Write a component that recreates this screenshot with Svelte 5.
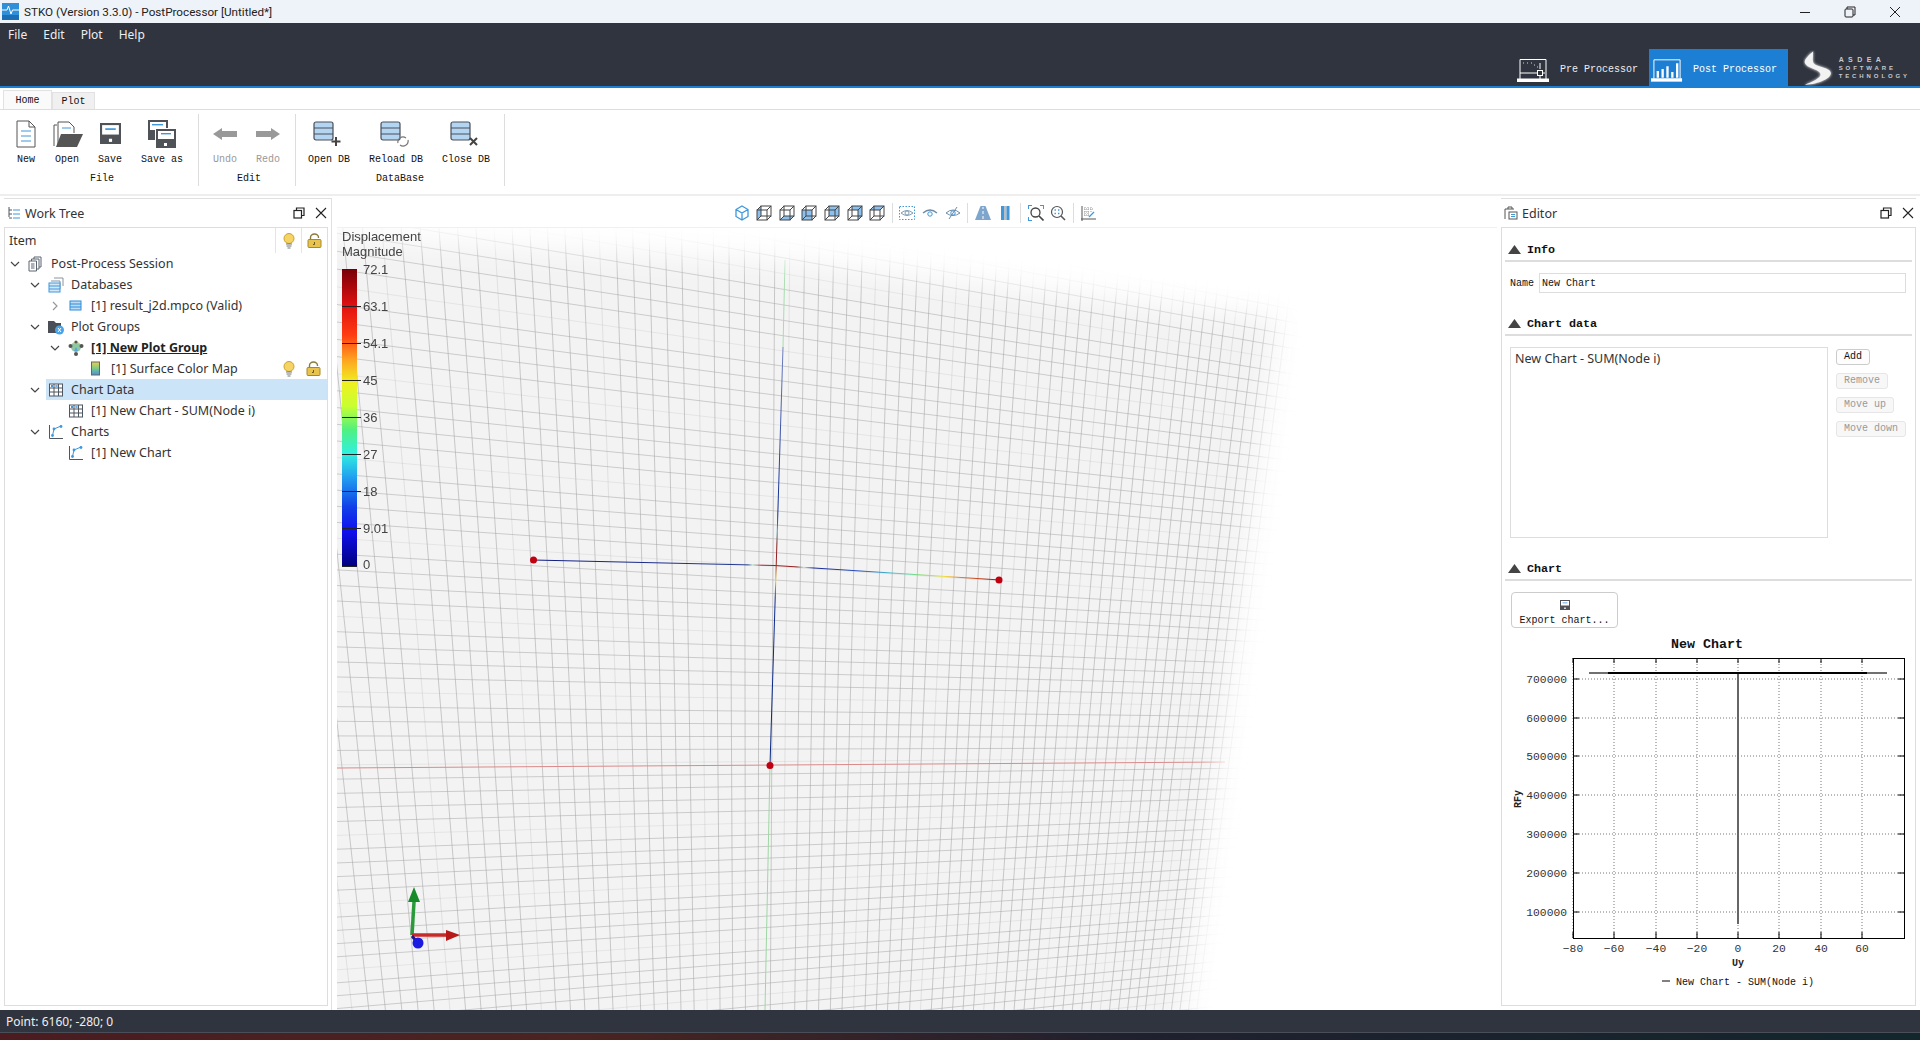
<script>
  const menus = ['File', 'Edit', 'Plot', 'Help'];

  const tree = [
    { d: 0, label: 'Post-Process Session', icon: 'session', arrow: 'open' },
    { d: 1, label: 'Databases', icon: 'dbs', arrow: 'open' },
    { d: 2, label: '[1] result_j2d.mpco (Valid)', icon: 'db', arrow: 'closed' },
    { d: 1, label: 'Plot Groups', icon: 'folder', arrow: 'open' },
    { d: 2, label: '[1] New Plot Group', icon: 'group', arrow: 'open', bold: true },
    { d: 3, label: '[1] Surface Color Map', icon: 'map', extras: true },
    { d: 1, label: 'Chart Data', icon: 'table', arrow: 'open', sel: true },
    { d: 2, label: '[1] New Chart - SUM(Node i)', icon: 'table' },
    { d: 1, label: 'Charts', icon: 'chart', arrow: 'open' },
    { d: 2, label: '[1] New Chart', icon: 'chart' }
  ];

  const faces = {
    a: '5,1 15,1 15,11 5,11',
    b: '1,15 11,15 15,11 5,11',
    c: '1,5 11,5 11,15 1,15',
    d: '5,1 15,1 15,11 11,15 11,5 5,5',
    e: '1,5 5,1 5,11 1,15',
    f: '1,5 5,1 15,1 11,5'
  };
  const cubes = ['e', 'b', 'c', 'a', 'd', 'f'];

  // perspective plane: two families of lines, each running to its own vanishing point
  const H = { x: 3500, y: 741, a: 1.117e6 };
  const V = { x: 750, y: 4460, a: 5.4e5 };
  const hLines = [];
  for (let u = 259; u < 333; u++) {
    const yk = V.y - H.a / u;
    const f = (x) => H.y + ((yk - H.y) * (H.x - x)) / (H.x - 800);
    hLines.push({ y1: f(337), y2: f(1500), o: u % 5 === 2 ? 0.2 : 0.55 });
  }
  const vLines = [];
  for (let u = 163; u < 271; u++) {
    const xk = H.x - V.a / u;
    const f = (y) => V.x + ((xk - V.x) * (V.y - y)) / (V.y - 600);
    vLines.push({ x1: f(228), x2: f(1010), o: u % 6 === 1 ? 0.25 : 0.6 });
  }

  const legend = [
    { v: '72.1', y: 270 }, { v: '63.1', y: 307 }, { v: '54.1', y: 344 },
    { v: '45', y: 381 }, { v: '36', y: 418 }, { v: '27', y: 455 },
    { v: '18', y: 492 }, { v: '9.01', y: 529 }, { v: '0', y: 565 }
  ];

  const yTicks = [
    { v: '700000', y: 680 }, { v: '600000', y: 719 }, { v: '500000', y: 757 },
    { v: '400000', y: 796 }, { v: '300000', y: 835 }, { v: '200000', y: 874 },
    { v: '100000', y: 913 }
  ];
  const xTicks = [
    { v: '−80', x: 1574 }, { v: '−60', x: 1615 }, { v: '−40', x: 1657 }, { v: '−20', x: 1698 },
    { v: '0', x: 1739 }, { v: '20', x: 1780 }, { v: '40', x: 1822 }, { v: '60', x: 1863 }
  ];
</script>

{#snippet bulb()}
  <svg width="14" height="16" viewBox="0 0 14 16">
    <circle cx="7" cy="5.5" r="5" fill="#f6d365" stroke="#c9a227" />
    <path d="M4 11h6M4.5 13h5M5.5 15h3" stroke="#777" stroke-width="1.2" />
  </svg>
{/snippet}

{#snippet lock()}
  <svg width="15" height="15" viewBox="0 0 15 15">
    <path d="M3.5 7V4.5a4 3.5 0 0 1 8 0V5" fill="none" stroke="#8a7a3a" stroke-width="1.4" />
    <rect x="1" y="6.5" width="13" height="8" rx="1" fill="#e8c34e" stroke="#a58a2c" />
    <path d="M7.5 9v2.5H6" fill="none" stroke="#6b5a1c" />
  </svg>
{/snippet}

{#snippet treeIcon(name)}
  <svg width="16" height="16" viewBox="0 0 16 16" fill="none">
    {#if name === 'session'}
      <path d="M6 3V1h7v10h-2M3.5 5V3H11v10H9M1 5h7.5v10H1z" fill="#fff" stroke="#5a6470" />
      <path d="M3 8h3.5M3 10h3.5M3 12h3.5" stroke="#5a6470" />
    {:else if name === 'dbs'}
      <path d="M6 1h9v8M3 4h9v8" stroke="#8a949e" />
      <rect x="1" y="6" width="11" height="9" fill="#d4e8f8" stroke="#3f97dc" />
      <path d="M1 9h11M1 12h11" stroke="#3f97dc" />
    {:else if name === 'db'}
      <rect x="2" y="3" width="11" height="9" fill="#bcdcf5" stroke="#2f8cd8" />
      <path d="M2 6h11M2 9h11" stroke="#2f8cd8" />
    {:else if name === 'folder'}
      <path d="M0 2h6l2 2h5v10H0z" fill="#4a4f57" />
      <circle cx="11.5" cy="11" r="4.5" fill="#4aa3e6" />
      <path d="M10 9l3 4M13 9l-3 4" stroke="#fff" />
    {:else if name === 'group'}
      <circle cx="8" cy="7" r="5" fill="#8fc7a0" />
      <path d="M4 4a5 5 0 0 1 8 0z" fill="#e9c94c" />
      <path d="M6 11a5 5 0 0 0 4 0L8 7z" fill="#5aa6e0" />
      <circle cx="2.5" cy="6" r="2" fill="#555" /><circle cx="13.5" cy="6" r="2" fill="#555" /><circle cx="8" cy="14" r="2" fill="#555" /><circle cx="8" cy="2" r="1.6" fill="#555" />
    {:else if name === 'map'}
      <rect x="3.5" y="1" width="8" height="13" fill="url(#mapgrad)" stroke="#666" />
    {:else if name === 'table'}
      <rect x="1.5" y="2" width="13" height="12" fill="#fff" stroke="#4e5660" />
      <path d="M1.5 6h13M1.5 10h13M6 2v12M10.5 2v12" stroke="#4e5660" />
      <path d="M3 3l2 2M5 3L3 5M7.5 3l2 2M9.5 3l-2 2" stroke="#3f97dc" />
    {:else if name === 'chart'}
      <path d="M1.5 1v13.5H15" stroke="#4e5660" />
      <path d="M4.5 11.5L6 5l7-3" stroke="#3f97dc" />
      <circle cx="4.5" cy="11.5" r="1.4" fill="#3f97dc" /><circle cx="6" cy="5" r="1.4" fill="#3f97dc" /><circle cx="13" cy="2.5" r="1.4" fill="#3f97dc" />
    {/if}
  </svg>
{/snippet}

{#snippet restoreClose()}
  <svg width="12" height="12" viewBox="0 0 12 12" fill="none" stroke="#222" stroke-width="1.2">
    <rect x="1" y="3.5" width="7.5" height="7.5" fill="#fff" />
    <path d="M3.5 3.5V1H11v7.5H8.5" />
  </svg>
  <svg width="12" height="12" viewBox="0 0 12 12" fill="none" stroke="#222" stroke-width="1.1">
    <path d="M1 1l10 10M11 1L1 11" />
  </svg>
{/snippet}

{#snippet triangle()}
  <svg width="13" height="9" viewBox="0 0 13 9"><path d="M6.5 0L13 9H0z" fill="#444" /></svg>
{/snippet}

{#snippet floppy(s)}
  <svg width={s} height={s} viewBox="0 0 20 20">
    <path d="M0 0h20v20H0z" fill="#4f5358" />
    <rect x="2" y="2" width="16" height="9" fill="#fff" />
    <rect x="5" y="5" width="10" height="1.6" fill="#3f97dc" />
    <rect x="8.5" y="15" width="3" height="3" fill="#fff" />
  </svg>
{/snippet}

{#snippet db()}
  <rect x="1" y="1" width="19" height="18" rx="2" fill="#b4d5f2" stroke="#4a4f57" stroke-width="1.2" />
  <path d="M1 7h19M1 13h19" stroke="#4a4f57" stroke-width="1.2" />
{/snippet}

<svg class="defs" width="0" height="0">
  <defs>
    <linearGradient id="mapgrad" x1="0" y1="0" x2="0" y2="1">
      <stop offset="0" stop-color="#e8d24e" /><stop offset="0.5" stop-color="#7cc98a" /><stop offset="1" stop-color="#4a8fd8" />
    </linearGradient>
  </defs>
</svg>

<div class="app">
  <div class="titlebar">
    <svg class="applogo" width="17" height="17" viewBox="0 0 17 17">
      <rect width="17" height="17" fill="#2f8fd8" />
      <path d="M0 7h5l1.5-4L9 11l1.5-4H17" fill="none" stroke="#fff" />
      <rect y="12" width="17" height="5" fill="#1c6fb5" />
    </svg>
    <span class="title">STKO (Version 3.3.0) - PostProcessor [Untitled*]</span>
    <div class="winctl">
      <svg width="12" height="12" viewBox="0 0 12 12"><path d="M1 6.5h10" stroke="#222" /></svg>
      <svg width="12" height="12" viewBox="0 0 12 12" fill="none" stroke="#222"><rect x="1" y="3" width="8" height="8" rx="1" /><path d="M3 3V1h8v8H9" /></svg>
      <svg width="12" height="12" viewBox="0 0 12 12" fill="none" stroke="#222"><path d="M1 1l10 10M11 1L1 11" /></svg>
    </div>
  </div>

  <header class="appbar">
    <nav class="menu">
      {#each menus as m}<span>{m}</span>{/each}
    </nav>
    <div class="modes">
      <div class="mode">
        <svg width="34" height="25" viewBox="0 0 34 25" fill="none" stroke="#fff">
          <path d="M3 21V1.5h26V21" />
          <path d="M3 15h17M26 15h2M23 5v6M23 18v3" />
          <rect x="20.5" y="12.5" width="5" height="5" />
          <path d="M6 5h.8M10 5h.8M14 5h.8M17 7h.8M20 9h.8" />
          <rect x="0" y="20.5" width="32" height="3.5" fill="#fff" stroke="none" />
        </svg>
        <span>Pre Processor</span>
      </div>
      <div class="mode active">
        <svg width="34" height="25" viewBox="0 0 34 25" fill="none" stroke="#fff">
          <path d="M3 21V1.5h27V21" />
          <path d="M7 20v-7M12 20v-9M17 20V8M22 20v-6M27 20V5" stroke-width="2.4" />
          <rect x="0" y="20.5" width="32" height="3.5" fill="#fff" stroke="none" />
        </svg>
        <span>Post Processor</span>
      </div>
      <div class="brand">
        <svg width="32" height="36" viewBox="0 0 32 36">
          <path d="M11 0C2 8 -1 12 5 16c6 3 14 5 14 9 0 4-9 8-17 11 10 0 29-6 28-13-1-6-17-6-19-11C10 9 11 4 11 0z" fill="#f2f2f2" class="swoosh" />
        </svg>
        <div class="brandtext">
          <b class="l1">ASDEA</b>
          <b class="l2">SOFTWARE</b>
          <b class="l2">TECHNOLOGY</b>
        </div>
      </div>
    </div>
  </header>

  <section class="ribbon">
    <div class="tabs">
      <span class="tab on">Home</span>
      <span class="tab">Plot</span>
    </div>
    <div class="groups">
      <div class="group file">
        <div class="btns">
          <div class="rb w40">
            <svg width="22" height="30" viewBox="0 0 22 30" fill="#fff" stroke="#555">
              <path d="M2 2h12l6 6v20H2z" /><path d="M14 2v6h6" fill="none" />
              <path d="M6 12h10M6 17h10M6 22h10" stroke="#3f97dc" />
            </svg>
            <span>New</span>
          </div>
          <div class="rb w42">
            <svg width="32" height="30" viewBox="0 0 32 30">
              <path d="M3 27V6h3M7 27V3h11l5 5v6" fill="#fff" stroke="#555" />
              <path d="M11 9h9" stroke="#3f97dc" />
              <path d="M5 28l5-13h22l-6 13z" fill="#555" />
            </svg>
            <span>Open</span>
          </div>
          <div class="rb w44">
            {@render floppy(21)}
            <span>Save</span>
          </div>
          <div class="rb w60">
            <svg width="30" height="30" viewBox="0 0 30 30">
              <path d="M1 1h20v20H1z" fill="#4f5358" />
              <rect x="3" y="3" width="16" height="8" fill="#fff" />
              <rect x="5" y="5" width="11" height="1.4" fill="#3f97dc" />
              <path d="M8 9h21v20H8z" fill="#fff" />
              <path d="M9 10h20v19H9z" fill="#4f5358" />
              <rect x="11" y="12" width="16" height="8" fill="#fff" />
              <rect x="14" y="14" width="10" height="1.4" fill="#3f97dc" />
              <rect x="17" y="24" width="3" height="3" fill="#fff" />
            </svg>
            <span>Save as</span>
          </div>
        </div>
        <div class="glabel">File</div>
      </div>

      <div class="group edit">
        <div class="btns">
          <div class="rb w44 off">
            <svg width="24" height="14" viewBox="0 0 24 14"><path d="M0 7l9-6v3h15v6H9v3z" fill="#999" /></svg>
            <span>Undo</span>
          </div>
          <div class="rb w42 off">
            <svg width="24" height="14" viewBox="0 0 24 14"><path d="M24 7l-9-6v3H0v6h15v3z" fill="#999" /></svg>
            <span>Redo</span>
          </div>
        </div>
        <div class="glabel">Edit</div>
      </div>

      <div class="group dbase">
        <div class="btns">
          <div class="rb w66">
            <svg width="32" height="26" viewBox="0 0 32 26" fill="none">
              {@render db()}
              <path d="M23 16v9M18.5 20.5h9" stroke="#444" stroke-width="2" />
            </svg>
            <span>Open DB</span>
          </div>
          <div class="rb w68">
            <svg width="32" height="26" viewBox="0 0 32 26" fill="none">
              {@render db()}
              <path d="M18 22a5 5 0 0 1 8-5M28 19a5 5 0 0 1-8 5" stroke="#777" stroke-width="1.2" />
            </svg>
            <span>Reload DB</span>
          </div>
          <div class="rb w72">
            <svg width="32" height="26" viewBox="0 0 32 26" fill="none">
              {@render db()}
              <path d="M20 17l7 7M27 17l-7 7" stroke="#444" stroke-width="2" />
            </svg>
            <span>Close DB</span>
          </div>
        </div>
        <div class="glabel">DataBase</div>
      </div>
    </div>
  </section>

  <main class="main">
    <aside class="panel left">
      <div class="phead">
        <svg width="14" height="14" viewBox="0 0 14 14" fill="none" stroke="#4e5660">
          <path d="M2 1v10M2 4h3M2 8h3M2 12h3" /><path d="M6 4h7M6 8h7M6 12h7" stroke="#3f97dc" />
        </svg>
        <span class="ptitle">Work Tree</span>
        <div class="pbtns">{@render restoreClose()}</div>
      </div>
      <div class="treebox">
        <div class="treehead">
          <span class="thitem">Item</span>
          <span class="thcol">{@render bulb()}</span>
          <span class="thcol">{@render lock()}</span>
        </div>
        {#each tree as row}
          <div class="row" style="padding-left: {2 + row.d * 20}px">
            <span class="arrow">
              {#if row.arrow === 'open'}
                <svg width="10" height="10" viewBox="0 0 10 10"><path d="M1 3l4 4 4-4" fill="none" stroke="#444" stroke-width="1.2" /></svg>
              {:else if row.arrow === 'closed'}
                <svg width="10" height="10" viewBox="0 0 10 10"><path d="M3 1l4 4-4 4" fill="none" stroke="#999" stroke-width="1.2" /></svg>
              {/if}
            </span>
            <div class="cell" class:sel={row.sel}>
              {@render treeIcon(row.icon)}
              <span class="lbl" class:bold={row.bold}>{row.label}</span>
              {#if row.extras}
                <span class="extras">{@render bulb()}{@render lock()}</span>
              {/if}
            </div>
          </div>
        {/each}
      </div>
    </aside>

    <div class="view">
      <div class="vtools">
        <svg width="16" height="16" viewBox="0 0 16 16" fill="none" stroke="#3f97dc" stroke-width="1.3">
          <path d="M8 1l6 3.5v7L8 15l-6-3.5v-7zM2 4.5L8 8l6-3.5M8 8v7" />
        </svg>
        {#each cubes as f}
          <svg width="16" height="16" viewBox="0 0 16 16" fill="none" stroke="#444">
            <polygon points={faces[f]} fill="#8cc0ee" stroke="none" />
            <rect x="1" y="5" width="10" height="10" />
            <rect x="5" y="1" width="10" height="10" />
            <path d="M1 5l4-4M11 5l4-4M1 15l4-4M11 15l4-4" />
          </svg>
        {/each}
        <i class="vsep"></i>
        <svg width="16" height="14" viewBox="0 0 16 14" fill="none" stroke="#3f97dc">
          <rect x="0.5" y="0.5" width="15" height="13" stroke-dasharray="1.5 1.5" />
          <path d="M2 7q6-5 12 0q-6 5-12 0z" stroke="#7f9db5" /><circle cx="8" cy="7" r="2" stroke="#7f9db5" />
        </svg>
        <svg width="16" height="12" viewBox="0 0 16 12" fill="none" stroke="#6d8ba3">
          <path d="M1 6q7-6 14 0" stroke-width="1.3" /><circle cx="8" cy="7" r="2.2" stroke="#3f97dc" />
        </svg>
        <svg width="16" height="14" viewBox="0 0 16 14" fill="none" stroke="#6d8ba3">
          <path d="M1 7q7-6 14 0q-7 5-14 0z" /><circle cx="8" cy="7" r="2.2" stroke="#3f97dc" /><path d="M12 1L4 13" />
        </svg>
        <i class="vsep"></i>
        <svg width="16" height="16" viewBox="0 0 16 16">
          <path d="M5.5 1h5L16 15H0z" fill="#7ea6cc" /><path d="M8 2v2M8 6v3M8 11v3" stroke="#fff" />
        </svg>
        <svg width="16" height="14" viewBox="0 0 16 14">
          <rect x="4" y="0" width="3" height="14" fill="#3f97dc" /><rect x="7" y="0" width="2.5" height="14" fill="#b9bec4" /><rect x="9.5" y="0" width="3" height="14" fill="#3f97dc" />
        </svg>
        <i class="vsep"></i>
        <svg width="16" height="16" viewBox="0 0 16 16" fill="none">
          <path d="M0 4V0h4M12 0h4v4M0 12v4h4" stroke="#3f97dc" stroke-width="2" />
          <circle cx="7.5" cy="7.5" r="4.5" stroke="#444" stroke-width="1.3" /><path d="M11 11l4.5 4.5" stroke="#444" stroke-width="1.6" />
        </svg>
        <svg width="16" height="16" viewBox="0 0 16 16" fill="none">
          <circle cx="7" cy="7" r="5.5" stroke="#555" stroke-width="1.2" />
          <path d="M4.5 5h1.4M8 5h1.4M4.5 8.5h1.4M8 8.5h1.4" stroke="#3f97dc" stroke-width="1.6" />
          <path d="M11 11l4 4" stroke="#555" stroke-width="1.6" />
        </svg>
        <i class="vsep"></i>
        <svg width="16" height="16" viewBox="0 0 16 16" fill="none">
          <path d="M1 14h15M2 1v15" stroke="#555" />
          <path d="M5 2v9M8 2v9M11 2v5M4 4h10M4 7h6M4 10h6" stroke="#999" stroke-dasharray="1 1" />
          <path d="M9 12l5-5" stroke="#3f97dc" stroke-width="1.3" />
        </svg>
      </div>

      <div class="canvas">
        <svg class="scene" viewBox="337 228 1160 782" width="1160" height="782">
          <defs>
            <filter id="soft" x="-10%" y="-10%" width="120%" height="120%"><feGaussianBlur stdDeviation="14" /></filter>
            <mask id="plane" maskUnits="userSpaceOnUse" x="337" y="228" width="1160" height="782">
              <polygon points="250,232 800,262 1277,318 1175,1080 250,1080" fill="#fff" filter="url(#soft)" />
            </mask>
            <linearGradient id="hline" gradientUnits="userSpaceOnUse" x1="533" y1="0" x2="1000" y2="0">
              <stop offset="0" stop-color="#101a80" /><stop offset="0.46" stop-color="#223a90" />
              <stop offset="0.47" stop-color="#a0f0d0" /><stop offset="0.49" stop-color="#a82020" />
              <stop offset="0.565" stop-color="#902020" /><stop offset="0.58" stop-color="#a0f0e0" />
              <stop offset="0.6" stop-color="#182a90" /><stop offset="0.7" stop-color="#2a50c0" />
              <stop offset="0.78" stop-color="#40d0d0" /><stop offset="0.84" stop-color="#90e060" />
              <stop offset="0.88" stop-color="#f0e040" /><stop offset="0.92" stop-color="#e07030" />
              <stop offset="1" stop-color="#901010" />
            </linearGradient>
            <linearGradient id="vline" gradientUnits="userSpaceOnUse" x1="0" y1="765" x2="0" y2="347">
              <stop offset="0" stop-color="#0a2a80" /><stop offset="0.4" stop-color="#0a2a90" />
              <stop offset="0.44" stop-color="#e0d040" /><stop offset="0.48" stop-color="#a02020" />
              <stop offset="0.53" stop-color="#802020" /><stop offset="0.56" stop-color="#40a0c0" />
              <stop offset="0.6" stop-color="#0a2a90" /><stop offset="1" stop-color="#7080c0" />
            </linearGradient>
          </defs>
          <g mask="url(#plane)">
            <rect x="337" y="228" width="1160" height="782" fill="#f3f3f3" />
            {#each hLines as l}
              <line x1="337" x2="1500" y1={l.y1} y2={l.y2} stroke="#aaa" opacity={l.o} />
            {/each}
            {#each vLines as l}
              <line x1={l.x1} x2={l.x2} y1="228" y2="1010" stroke="#aaa" opacity={l.o} />
            {/each}
            <line x1="337" y1="768" x2="1225" y2="762" stroke="#d98a8a" />
            <line x1="770" y1="765" x2="765" y2="1010" stroke="#9fd6a4" />
            <line x1="783" y1="347" x2="785" y2="260" stroke="#a8dcae" />
          </g>
          <polyline points="533,560 775,565.5 1000,580" fill="none" stroke="url(#hline)" stroke-width="1" />
          <line x1="770" y1="765" x2="783" y2="347" stroke="url(#vline)" stroke-width="1" />
          <circle cx="533.5" cy="560" r="3.5" fill="#c00010" />
          <circle cx="999" cy="580" r="3.5" fill="#c00010" />
          <circle cx="770" cy="765.5" r="3.5" fill="#c00010" />

          <path d="M412 935l2-33" stroke="#2a9a3a" stroke-width="3.5" />
          <path d="M414 887l6 15h-12z" fill="#178a2a" />
          <path d="M412 935h36" stroke="#c82a2a" stroke-width="3.5" />
          <path d="M460 935l-14 6v-11z" fill="#b81818" />
          <path d="M412 936l5 6" stroke="#1a1a90" stroke-width="3" />
          <circle cx="418" cy="943" r="5.5" fill="#1a1ae0" />
        </svg>

        <div class="cbtitle">Displacement<br />Magnitude</div>
        <div class="cbar"></div>
        {#each legend as t}
          <span class="cblabel" style="top: {t.y - 228 - 8}px">{t.v}</span>
          {#if t.v !== '72.1' && t.v !== '0'}
            <i class="cbtick" style="top: {t.y - 228 - 1}px"></i>
          {/if}
        {/each}
      </div>
    </div>

    <aside class="panel right">
      <div class="phead">
        <svg width="14" height="14" viewBox="0 0 14 14" fill="none" stroke="#555">
          <path d="M1 13V3h9M4 3V1h4v2" /><rect x="5" y="6" width="8" height="7" fill="#fff" /><path d="M7 8.5h4M7 10.5h4" stroke="#3f97dc" />
        </svg>
        <span class="ptitle">Editor</span>
        <div class="pbtns">{@render restoreClose()}</div>
      </div>
      <div class="editor">
        <div class="sect first">{@render triangle()}<b>Info</b></div>
        <div class="namerow">
          <label class="mono" for="nm">Name</label>
          <input id="nm" class="mono" value="New Chart" />
        </div>

        <div class="sect gap1">{@render triangle()}<b>Chart data</b></div>
        <div class="datarow">
          <div class="list">New Chart - SUM(Node i)</div>
          <div class="listbtns">
            <button class="mono">Add</button>
            <button class="mono" disabled>Remove</button>
            <button class="mono" disabled>Move up</button>
            <button class="mono" disabled>Move down</button>
          </div>
        </div>

        <div class="sect gap2">{@render triangle()}<b>Chart</b></div>
        <button class="export mono">
          {@render floppy(10)}
          Export chart...
        </button>

        <svg class="chart" viewBox="1504 634 412 366" width="412" height="366">
          <text x="1708" y="649" class="ctitle" text-anchor="middle">New Chart</text>
          {#each yTicks as t}
            <line x1="1574" x2="1905" y1={t.y} y2={t.y} stroke="#777" stroke-dasharray="1 2" />
            <line x1="1574" x2="1580" y1={t.y} y2={t.y} stroke="#000" />
            <line x1="1899" x2="1905" y1={t.y} y2={t.y} stroke="#000" />
            <text x="1568" y={t.y + 4} class="tick" text-anchor="end">{t.v}</text>
          {/each}
          {#each xTicks as t}
            <line y1="659" y2="939" x1={t.x} x2={t.x} stroke="#777" stroke-dasharray="1 2" />
            <line y1="933" y2="939" x1={t.x} x2={t.x} stroke="#000" />
            <line y1="659" y2="664" x1={t.x} x2={t.x} stroke="#000" />
            <text x={t.x} y="953" class="tick" text-anchor="middle">{t.v}</text>
          {/each}
          <rect x="1574.5" y="659.5" width="331" height="280" fill="none" stroke="#000" />
          <line x1="1590" x2="1888" y1="674" y2="674" stroke="#707070" stroke-width="2" />
          <line x1="1609" x2="1868" y1="674" y2="674" stroke="#000" stroke-width="2" />
          <line x1="1739" x2="1739" y1="675" y2="925" stroke="#666" stroke-width="2" />
          <text class="axis" x="1739" y="967" text-anchor="middle">Uy</text>
          <text class="axis" transform="translate(1522 800) rotate(-90)" text-anchor="middle">RFy</text>
          <line x1="1663" x2="1671" y1="982" y2="982" stroke="#808080" stroke-width="2" />
          <text class="leg" x="1677" y="986">New Chart - SUM(Node i)</text>
        </svg>
      </div>
    </aside>
  </main>

  <footer class="status">Point: 6160; -280; 0</footer>
  <div class="taskstrip"></div>
</div>

<style>
  :global(body) {
    margin: 0;
    background: #fff;
    overflow: hidden;
  }

  .defs { position: absolute; }

  .app {
    width: 1920px;
    height: 1040px;
    display: flex;
    flex-direction: column;
    overflow: hidden;
    font-family: "Noto Sans", sans-serif;
    font-size: 12.5px;
    color: #333;
  }

  .mono { font-family: "Liberation Mono", monospace; font-size: 10px; }

  /* title bar */
  .titlebar {
    height: 23px;
    flex: none;
    display: flex;
    align-items: center;
    background: #eef2f9;
    padding-left: 2px;
  }
  .applogo { margin-right: 5px; }
  .title { font-family: Roboto, sans-serif; font-size: 11.7px; color: #222; }
  .winctl {
    margin-left: auto;
    display: flex;
    gap: 33px;
    padding-right: 19px;
  }

  /* dark header */
  .appbar {
    height: 63px;
    flex: none;
    box-sizing: content-box;
    background: #2f343f;
    border-bottom: 2px solid #1c7fd0;
    display: flex;
    justify-content: space-between;
  }
  .menu {
    display: flex;
    gap: 16px;
    padding: 3px 0 0 8px;
    color: #eee;
    font-size: 12px;
  }
  .modes { display: flex; align-items: flex-end; padding-right: 10px; }
  .mode {
    height: 37px;
    display: flex;
    align-items: center;
    gap: 9px;
    padding: 0 11px 0 2px;
    color: #eee;
    font-family: "Liberation Mono", monospace;
    font-size: 10px;
    box-sizing: border-box;
    white-space: nowrap;
  }
  .mode svg { margin-top: 6px; }
  .mode span { margin-top: 4px; }
  .mode.active { background: #1c7fd3; color: #fff; width: 139px; }
  .brand { display: flex; align-items: center; gap: 6px; height: 37px; margin-left: 15px; width: 107px; }
  .swoosh { filter: drop-shadow(0 0 1.5px #fff); }
  .brandtext { display: flex; flex-direction: column; color: #c8cace; line-height: 8px; font-family: "Liberation Sans", sans-serif; white-space: nowrap; }
  .l1 { font-size: 7px; letter-spacing: 4.4px; }
  .l2 { font-size: 6px; letter-spacing: 2.9px; }

  /* ribbon */
  .ribbon {
    height: 108px;
    flex: none;
    box-sizing: border-box;
    border-bottom: 2px solid #eee;
    display: flex;
    flex-direction: column;
  }
  .tabs { height: 22px; flex: none; display: flex; align-items: flex-end; padding-left: 3px; border-bottom: 1px solid #ddd; box-sizing: border-box; }
  .tab {
    height: 17px;
    display: flex;
    align-items: center;
    justify-content: center;
    width: 43px;
    background: #f0f0f0;
    border: 1px solid #e2e2e2;
    border-bottom: none;
    font-family: "Liberation Mono", monospace;
    font-size: 10px;
    color: #111;
    box-sizing: border-box;
  }
  .tab.on { width: 49px; height: 19px; background: #fafafa; }
  .groups { display: flex; padding-top: 4px; }
  .group {
    height: 72px;
    border-right: 1px solid #ddd;
    display: flex;
    flex-direction: column;
    font-family: "Liberation Mono", monospace;
    font-size: 10px;
    color: #111;
  }
  .group.file { width: 196px; padding-left: 3px; box-sizing: border-box; margin-left: 3px; }
  .group.edit { width: 97px; padding-left: 4px; box-sizing: border-box; }
  .group.dbase { width: 209px; padding-left: 0; box-sizing: border-box; }
  .btns { display: flex; height: 59px; }
  .rb { display: flex; flex-direction: column; align-items: center; justify-content: flex-end; box-sizing: border-box; padding-top: 4px; }
  .rb span { margin-top: 5px; line-height: 11px; padding-bottom: 8px; white-space: nowrap; }
  .rb svg { margin-bottom: auto; margin-top: auto; }
  .w40 { width: 40px; }
  .w42 { width: 42px; }
  .w44 { width: 44px; }
  .w60 { width: 60px; }
  .w66 { width: 66px; }
  .w68 { width: 68px; }
  .w72 { width: 72px; }
  .off { color: #999; }
  .glabel { text-align: center; line-height: 12px; }

  /* panels */
  .main { flex: 1; min-height: 0; display: flex; padding: 2px 0 0 4px; }
  .panel { display: flex; flex-direction: column; box-sizing: border-box; min-height: 0; }
  .panel.left { width: 328px; border-top: 1px solid #e0e0e0; border-right: 1px solid #e0e0e0; }
  .panel.right { width: 415px; margin-left: 4px; border-top: 1px solid #e0e0e0; padding-bottom: 4px; }
  .phead { height: 28px; flex: none; display: flex; align-items: center; gap: 4px; padding-left: 3px; box-sizing: border-box; }
  .ptitle { font-size: 12.5px; color: #333; }
  .pbtns { margin-left: auto; display: flex; gap: 10px; align-items: center; padding-right: 4px; }
  .right .pbtns { padding-right: 2px; }

  .treebox {
    flex: 1;
    width: 324px;
    border: 1px solid #ddd;
    box-sizing: border-box;
    margin-bottom: 4px;
  }
  .treehead { display: flex; align-items: center; height: 25px; }
  .thitem { flex: 1; padding-left: 4px; }
  .thcol { width: 25px; height: 25px; display: flex; align-items: center; justify-content: center; border-left: 1px solid #e4e4e4; }
  .row { display: flex; align-items: center; height: 21px; }
  .arrow { width: 16px; flex: none; display: flex; justify-content: center; }
  .cell { flex: 1; height: 21px; display: flex; align-items: center; gap: 7px; margin-left: 3px; padding-left: 2px; min-width: 0; }
  .cell.sel { background: #cce4f7; }
  .lbl { white-space: nowrap; }
  .lbl.bold { font-weight: 700; text-decoration: underline; color: #222; }
  .extras { margin-left: auto; display: flex; gap: 10px; align-items: center; padding-right: 6px; }

  /* viewport */
  .view { width: 1160px; flex: none; margin-left: 5px; padding-top: 2px; box-sizing: border-box; display: flex; flex-direction: column; min-height: 0; }
  .vtools {
    height: 28px;
    flex: none;
    display: flex;
    align-items: center;
    justify-content: center;
    gap: 6.6px;
    padding: 0 4px 1px 0;
    box-sizing: border-box;
    border-bottom: 1px solid #f0f0f0;
  }
  .vsep { width: 1px; height: 20px; background: #ddd; }
  .canvas { flex: 1; position: relative; overflow: hidden; min-height: 0; }
  .scene { position: absolute; left: 0; top: 0; display: block; }
  .cbtitle {
    position: absolute;
    left: 5px;
    top: 1px;
    font: 13px/15px "Liberation Sans", sans-serif;
    color: #444;
  }
  .cbar {
    position: absolute;
    left: 5px;
    top: 41px;
    width: 15px;
    height: 296px;
    border: 1px solid #222;
    border-width: 1px 0;
    background: linear-gradient(#7a0008 0%, #e01010 12%, #ff3c10 22%, #ffa020 30%, #f0f020 38%, #c8ff30 46%, #50f080 54%, #30f0e0 62%, #20a0f0 70%, #1040e8 80%, #1010f0 88%, #000080 100%);
  }
  .cblabel {
    position: absolute;
    left: 26px;
    font: 13px/16px "Liberation Sans", sans-serif;
    color: #444;
  }
  .cbtick { position: absolute; left: 5px; width: 19px; height: 1px; background: #222; }

  /* editor */
  .editor {
    flex: 1;
    border: 1px solid #ddd;
    box-sizing: border-box;
    padding: 0 3px;
    min-height: 0;
  }
  .sect {
    height: 21px;
    display: flex;
    align-items: center;
    gap: 6px;
    padding-left: 3px;
    border-bottom: 2px solid #ddd;
    font-family: "Liberation Mono", monospace;
    font-size: 11.7px;
    color: #111;
    box-sizing: content-box;
  }
  .sect.first { margin-top: 11px; }
  .sect.gap1 { margin-top: 20px; }
  .sect.gap2 { margin-top: 20px; }
  .namerow { display: flex; align-items: center; gap: 5px; margin-top: 11px; padding-left: 5px; }
  .namerow label { color: #111; }
  input {
    width: 367px;
    height: 20px;
    box-sizing: border-box;
    border: 1px solid #ddd;
    outline: none;
    padding: 0 2px;
    color: #111;
    background: #fff;
  }
  .datarow { display: flex; margin-top: 11px; padding-left: 5px; gap: 8px; }
  .list {
    width: 318px;
    height: 191px;
    box-sizing: border-box;
    border: 1px solid #ddd;
    padding: 3px 4px 0;
    line-height: 16px;
  }
  .listbtns { display: flex; flex-direction: column; align-items: flex-start; gap: 8px; padding-top: 2px; }
  button {
    height: 16px;
    padding: 0 7px;
    background: #fdfdfd;
    border: 1px solid #ccc;
    border-radius: 3px;
    color: #111;
    line-height: 12px;
  }
  button:disabled { color: #999; background: #f7f7f7; border-color: #e6e6e6; }
  .export {
    display: flex;
    flex-direction: column;
    align-items: center;
    justify-content: flex-end;
    gap: 5px;
    width: 107px;
    height: 36px;
    margin: 11px 0 0 6px;
    padding: 0;
    background: #fff;
    border-radius: 4px;
  }
  .chart { display: block; margin-left: -2px; margin-top: 5px; }
  .ctitle { font: bold 13.3px "Liberation Mono", monospace; fill: #111; }
  .tick { font: 11.3px "Liberation Mono", monospace; fill: #333; }
  .axis { font: bold 10px "Liberation Mono", monospace; fill: #222; }
  .leg { font: 10px "Liberation Mono", monospace; fill: #111; }

  /* bottom */
  .status {
    height: 22px;
    flex: none;
    background: #2f343f;
    color: #eee;
    display: flex;
    align-items: center;
    padding-left: 6px;
    font-size: 12px;
    border-bottom: 1px solid #4a4e58;
    box-sizing: content-box;
  }
  .taskstrip {
    height: 7px;
    flex: none;
    background: linear-gradient(90deg, #4a1c20 0%, #4a2420 30%, #20202e 58%, #12262c 100%);
  }
</style>
